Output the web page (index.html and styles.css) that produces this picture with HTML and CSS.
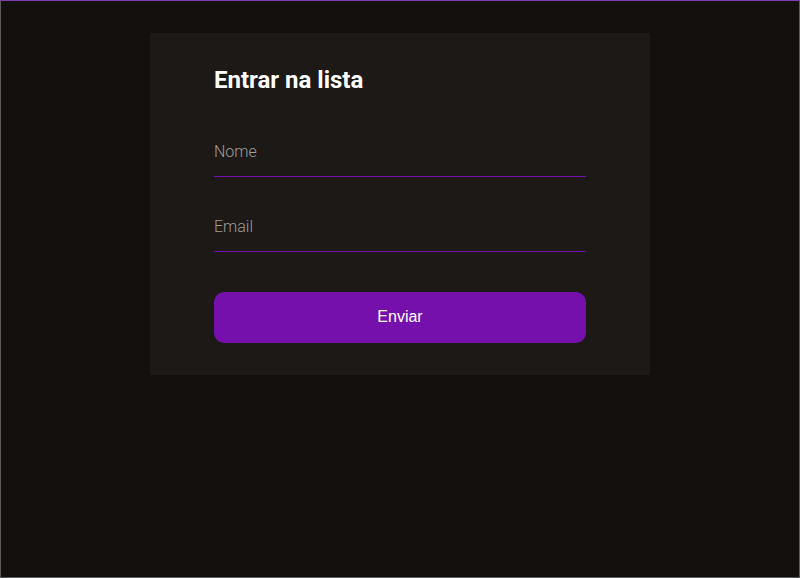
FILE: index.html
```html
<!DOCTYPE html>
<html lang="pt-BR">
<head>
<meta charset="utf-8">
<title>Entrar na lista</title>
<link rel="stylesheet" href="styles.css">
</head>
<body>
<div class="page">
  <form class="card">
    <h1 class="title">Entrar na lista</h1>
    <input class="field" type="text" placeholder="Nome">
    <input class="field" type="email" placeholder="Email">
    <button class="submit" type="button">Enviar</button>
  </form>
</div>
</body>
</html>
```
FILE: styles.css
```css
html, body {
  margin: 0;
  padding: 0;
  height: 100%;
  background: #13100e;
}
.page {
  box-sizing: border-box;
  height: 100vh;
  border: 1px solid #5a5a5a;
  border-top-color: #7a3fb0;
  padding-top: 32px;
  display: flex;
  flex-direction: column;
  align-items: center;
  font-family: Roboto, "Liberation Sans", sans-serif;
}
.card {
  box-sizing: border-box;
  width: 500px;
  background: #1c1917;
  padding: 32px 64px;
  display: flex;
  flex-direction: column;
}
.title {
  margin: 0 0 31px;
  font-size: 24px;
  line-height: 30px;
  font-weight: 700;
  color: #ffffff;
}
.field {
  box-sizing: border-box;
  height: 51px;
  padding: 0;
  border: 0;
  border-bottom: 1px solid #7510ad;
  background: transparent;
  color: #e0e0e0;
  font-family: Roboto, "Liberation Sans", sans-serif;
  font-size: 16px;
  font-weight: 300;
  outline: none;
}
.field::placeholder {
  color: #a09c98;
  opacity: 1;
}
.field + .field {
  margin-top: 24px;
}
.submit {
  margin-top: 40px;
  height: 51px;
  padding: 0 0 2px;
  border: 0;
  border-radius: 10px;
  background: #7510ad;
  color: #ffffff;
  font-family: "Liberation Sans", Arial, sans-serif;
  font-size: 16px;
  font-weight: 400;
  cursor: pointer;
}
```
